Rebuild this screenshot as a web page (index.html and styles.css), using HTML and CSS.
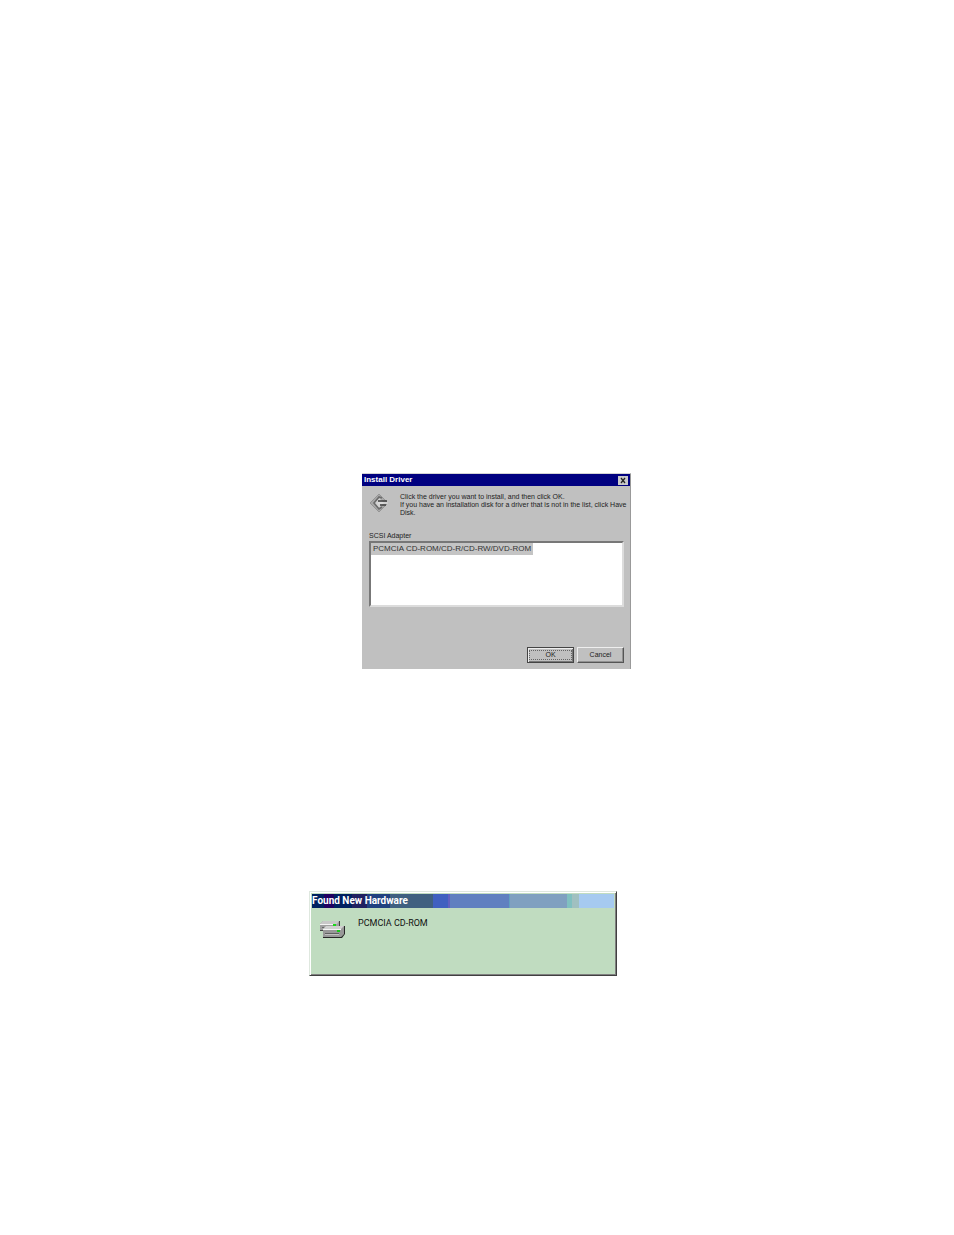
FILE: index.html
```html
<!DOCTYPE html>
<html lang="en">
<head>
<meta charset="utf-8">
<title>Driver installation</title>
<link rel="stylesheet" href="styles.css">
</head>
<body>
<main class="page">
  <section class="install" aria-labelledby="install-title">
    <header class="install-bar">
      <h1 class="install-title" id="install-title">Install Driver</h1>
      <button class="close" type="button" aria-label="Close">
        <svg viewBox="0 0 10 9" width="10" height="9"><path d="M3 2l4 5M7 2L3 7" stroke="#222" stroke-width="1.3"/></svg>
      </button>
    </header>
    <div class="install-body">
      <div class="intro">
        <svg class="driver-icon" viewBox="0 0 20 20" width="20" height="20" aria-hidden="true">
          <path d="M10 1L19 10L10 19L1 10Z" fill="#a8a8a8" stroke="#949494"/>
          <path d="M10 5L15 10L10 15L5 10Z" fill="#d2d2d2"/>
          <path d="M13 5L10 4L5 10L10 16L13 14" fill="none" stroke="#6c6c6c" stroke-width="1.6"/>
          <path d="M9 8H18M11 12H17" stroke="#3c3c3c" stroke-width="1.5"/>
          <path d="M9 10H19" stroke="#dedede" stroke-width="1.5"/>
        </svg>
        <p class="intro-text">Click the driver you want to install, and then click OK.<br>If you have an installation disk for a driver that is not in the list, click Have<br>Disk.</p>
      </div>
      <label class="list-label" for="drivers">SCSI Adapter</label>
      <select class="list" id="drivers" size="4">
        <option class="driver">PCMCIA CD-ROM/CD-R/CD-RW/DVD-ROM</option>
      </select>
      <div class="actions">
        <button class="button button-default" type="button"><span class="focus">OK</span></button>
        <button class="button" type="button">Cancel</button>
      </div>
    </div>
  </section>

  <section class="found" aria-labelledby="found-title">
    <h2 class="found-bar" id="found-title">Found New Hardware</h2>
    <div class="found-body">
      <svg class="drive-icon" viewBox="0 0 26 18" width="26" height="18" aria-hidden="true">
        <path d="M1 4L4 1H20V8L18 11H1Z" fill="#a0a0a0"/>
        <path d="M4 1H20L18 4H1Z" fill="#c8c8c8"/>
        <path d="M1 4H14V5H1Z" fill="#f4f4f4"/>
        <path d="M3 7H12V8H3Z" fill="#686868"/>
        <path d="M14 4H17V6H14Z" fill="#19d719"/>
        <path d="M20 1H21V7H20ZM1 10H5V11H1Z" fill="#444"/>
        <path d="M4 9L7 6H25V14L22 17H4Z" fill="#989898"/>
        <path d="M7 6H25L22 9H4Z" fill="#d0d0d0"/>
        <path d="M4 9H22V10H4Z" fill="#f4f4f4"/>
        <path d="M6 14H20V15H6Z" fill="#c0c0c0"/>
        <path d="M6 13H20V14H6Z" fill="#606060"/>
        <path d="M18 10H21V12H18Z" fill="#19c719"/>
        <path d="M25 6H26V14L23 18H4V17H22L25 14Z" fill="#282828"/>
      </svg>
      <p class="device">PCMCIA CD-ROM</p>
    </div>
  </section>
</main>
</body>
</html>
```
FILE: styles.css
```css
* { box-sizing: border-box; }
body {
  margin: 0;
  background: #fff;
  color: #222;
  font-family: "Liberation Sans", Arial, sans-serif;
}
h1, h2, p { margin: 0; }
svg { display: block; flex: none; }
.page {
  display: flex;
  flex-direction: column;
  align-items: flex-start;
  gap: 222px;
  padding: 473px 0 40px 309px;
}
.install {
  width: 269px;
  margin-left: 53px;
  background: #c0c0c0;
  border-right: 1px solid #999;
  border-top: 1px solid #d4d4d4;
}
.install-bar {
  display: flex;
  align-items: center;
  justify-content: space-between;
  height: 12px;
  padding: 0 2px;
  background: #000080;
}
.install-title { color: #fff; font-size: 8px; line-height: 12px; }
.close {
  padding: 0;
  background: #c8c8c8;
  border: 0;
}
.install-body { padding: 7px 6px 6px 7px; }
.intro { display: flex; gap: 11px; }
.intro-text {
  font-size: 7px;
  line-height: 8px;
  white-space: nowrap;
}
.list-label {
  display: block;
  margin-top: 14px;
  font-size: 7px;
  line-height: 10px;
}
.list {
  display: block;
  width: 100%;
  height: 66px;
  padding: 0;
  overflow: hidden;
  background: #fff;
  border: 2px solid;
  border-color: #777 #dcdcdc #dcdcdc #777;
  border-radius: 0;
  outline: 0;
  font: 8px/12px "Liberation Sans", Arial, sans-serif;
}
.driver {
  width: 162px;
  min-height: 12px;
  padding: 1px 2px;
  background: #c4c4c4;
  color: #333;
}
.actions {
  display: flex;
  justify-content: flex-end;
  gap: 3px;
  margin-top: 40px;
}
.button {
  display: flex;
  width: 47px;
  height: 16px;
  padding: 1px;
  background: #c0c0c0;
  border: 1px solid;
  border-color: #eee #555 #555 #eee;
  box-shadow: inset -1px -1px #929292;
  color: #222;
  font-family: inherit;
  font-size: 7px;
  line-height: 12px;
  align-items: center;
  justify-content: center;
}
.button-default {
  border-color: #444;
  box-shadow: inset 1px 1px #eee, inset -1px -1px #777;
}
.focus { flex: 1; border: 1px dotted #666; line-height: 8px; }
.found {
  width: 308px;
  background: #c0dcc0;
  border: 1px solid;
  border-color: #dfe8df #404040 #404040 #dfe8df;
  box-shadow: inset 1px 1px #fff, inset -1px -1px #808080;
  padding: 2px;
}
.found-bar {
  height: 14px;
  background: linear-gradient(90deg,
    #002060 0 12px, #200060 12px 22px, #002060 22px 40px,
    #202060 40px 55px, #204080 55px 78px, #406080 78px 121px,
    #4060c0 121px 136px, #6060c0 136px 138px, #6080c0 138px 197px,
    #60a0c0 197px 198px, #80a0c0 198px 255px, #80c0c0 255px 260px,
    #a0c0c0 260px 267px, #a6caf0 267px);
  color: #fff;
  font: bold 10px/14px Roboto, "Liberation Sans", sans-serif;
}
.found-body {
  display: flex;
  gap: 13px;
  min-height: 65px;
  padding: 9px 7px;
}
.drive-icon { margin-top: 3px; }
.device { color: #111; font: 9px/12px Roboto, "Liberation Sans", sans-serif; }
```
